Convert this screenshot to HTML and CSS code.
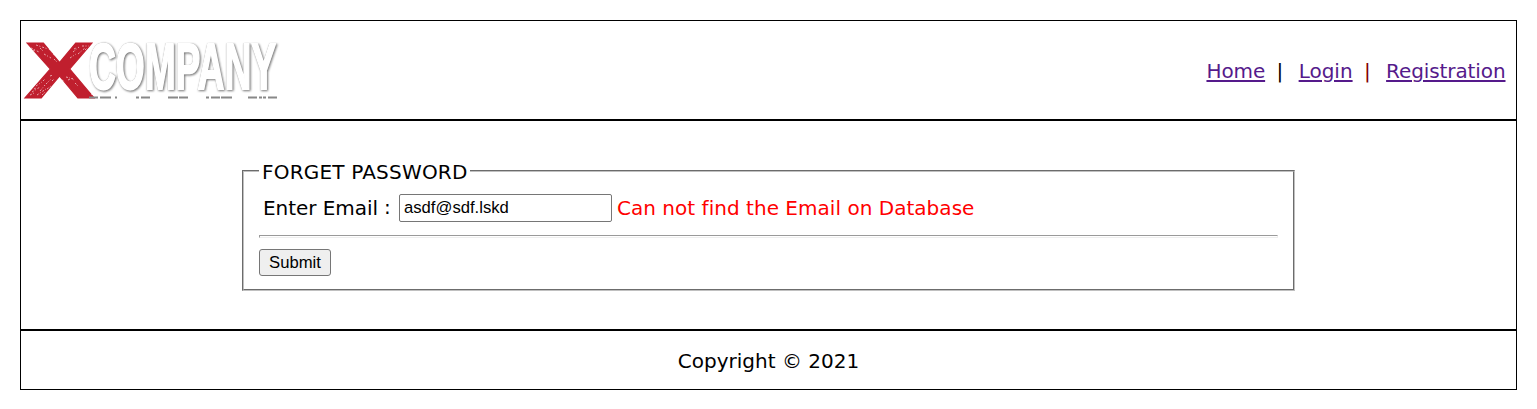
FILE: index.html
```html
<!DOCTYPE html>
<html lang="en">
<head>
<meta charset="utf-8">
<title>Forget Password</title>
<link rel="stylesheet" href="styles.css">
</head>
<body>
<div class="frame">
  <header class="header">
    <svg class="logo" width="260" height="64" viewBox="0 0 260 64" role="img" aria-label="X Company">
      <text class="logo-x" x="0" y="59.500" textLength="71" lengthAdjust="spacingAndGlyphs">X</text>
      <g class="scratch">
        <path d="M7 10l8 4M12 7l12 4M20 16l7 4M25 11l6 7M16 10l3 3M49 14l6-5M54 16l7-6M58 8l7 0M46 20l6-4M42 39l4 1M44 42l5-2M48 40l2 3M12 48l6-4M8 54l8-5M16 53l5-6M22 46l5-5M13 57l9-6M23 51l4-3M26 38l3-1M6 57l4-2"/>
        <path d="M9 12l2 1M30 21l3 3M61 12l2-2M50 11l2-1M19 43l2-2M10 51l2-1M18 57l3-3M28 43l2-2M38 42l3 2M51 45l3 3M67 56l3 1"/>
      </g>
      <text class="logo-word" x="65" y="51" textLength="187" lengthAdjust="spacingAndGlyphs">COMPANY</text>
      <path class="logo-dash" d="M65 59.500h9M76 59.500h11M91 59.500h2M112 59.500h3M117 59.500h9M144 59.500h10M155 59.500h9M182 59.500h3M187 59.500h9M197 59.500h11M224 59.500h9M235 59.500h3M239 59.500h3M244 59.500h9"/>
    </svg>
    <nav class="nav">
      <a class="link home" href="#">Home</a><span class="bar">|</span><a class="link login" href="#">Login</a><span class="bar bar-red">|</span><a class="link registration" href="#">Registration</a>
    </nav>
  </header>
  <main class="main">
    <form>
      <fieldset class="panel">
        <legend class="legend">FORGET PASSWORD</legend>
        <div class="row">
          <label class="label" for="email">Enter Email</label><span class="colon">:</span>
          <input class="input" id="email" type="text" value="asdf@sdf.lskd">
          <span class="error">Can not find the Email on Database</span>
        </div>
        <hr class="rule">
        <button class="submit" type="button">Submit</button>
      </fieldset>
    </form>
  </main>
  <footer class="footer">Copyright © 2021</footer>
</div>
</body>
</html>
```
FILE: styles.css
```css
* { box-sizing: border-box; }
body {
  margin: 20px;
  background: #fff;
  color: #000;
  font: 20px/24px Verdana, "DejaVu Sans", sans-serif;
  font-variant-ligatures: none;
}
.frame { height: 370px; border: 1px solid #000; }
.header {
  display: flex;
  justify-content: space-between;
  align-items: center;
  height: 100px;
  padding: 0 10.500px 0 3px;
  border-bottom: 2px solid #000;
}
.logo { display: block; overflow: visible; }
.logo-x { font: bold 79px "Liberation Sans", sans-serif; fill: #c01f2e; stroke: #c01f2e; stroke-width: 1; }
.scratch { fill: none; stroke: #fff; stroke-width: .8; stroke-dasharray: 2 1.500 1 2; opacity: .75; }
.logo-word {
  font: bold 64px "Liberation Sans", sans-serif;
  fill: #fff;
  stroke: #fff;
  stroke-width: 2;
  filter: drop-shadow(0 0 .4px #aaa) drop-shadow(1px 1.300px .8px #777);
}
.logo-dash { stroke: #888; stroke-width: 1.800; }
.nav { display: flex; align-items: center; padding-top: 2px; }
.link { color: #551a8b; text-decoration: underline; text-decoration-thickness: 2px; text-underline-offset: 2px; }
.home { letter-spacing: -.1px; }
.registration { letter-spacing: -.1px; }
.bar { width: 33.500px; text-align: center; padding-right: 4px; }
.bar-red { color: #800000; }
.main { height: 210px; padding: 37px 221px 0; border-bottom: 2px solid #000; }
.panel { width: 1053px; height: 133px; margin: 0; padding: 0 15px; border: 2px groove #c0c0c0; }
.legend { padding: 2px 2px 0 3px; letter-spacing: .2px; }
.row { display: flex; align-items: center; height: 28px; padding-left: 4px; margin-top: 10px; }
.label { letter-spacing: -.05px; }
.colon { width: 21px; padding-right: 2px; text-align: center; line-height: 20px; padding-bottom: 2px; }
.input {
  width: 213px;
  height: 28px;
  padding: 1px 4px;
  border: 1px solid #767676;
  border-radius: 2px;
  font: 16.670px "Liberation Sans", Arial, sans-serif;
}
.error { color: #f00; margin-left: 5px; letter-spacing: .03px; }
.rule { height: 3px; margin: 13px 0 11px; border: 1px inset #eee; }
.submit {
  display: block;
  width: 72px;
  height: 27px;
  padding: 0;
  border: 1px solid #767676;
  border-radius: 3px;
  background: #efefef;
  color: #000;
  font: 16.670px "Liberation Sans", Arial, sans-serif;
}
.footer { height: 58px; line-height: 60px; text-align: center; }
```
